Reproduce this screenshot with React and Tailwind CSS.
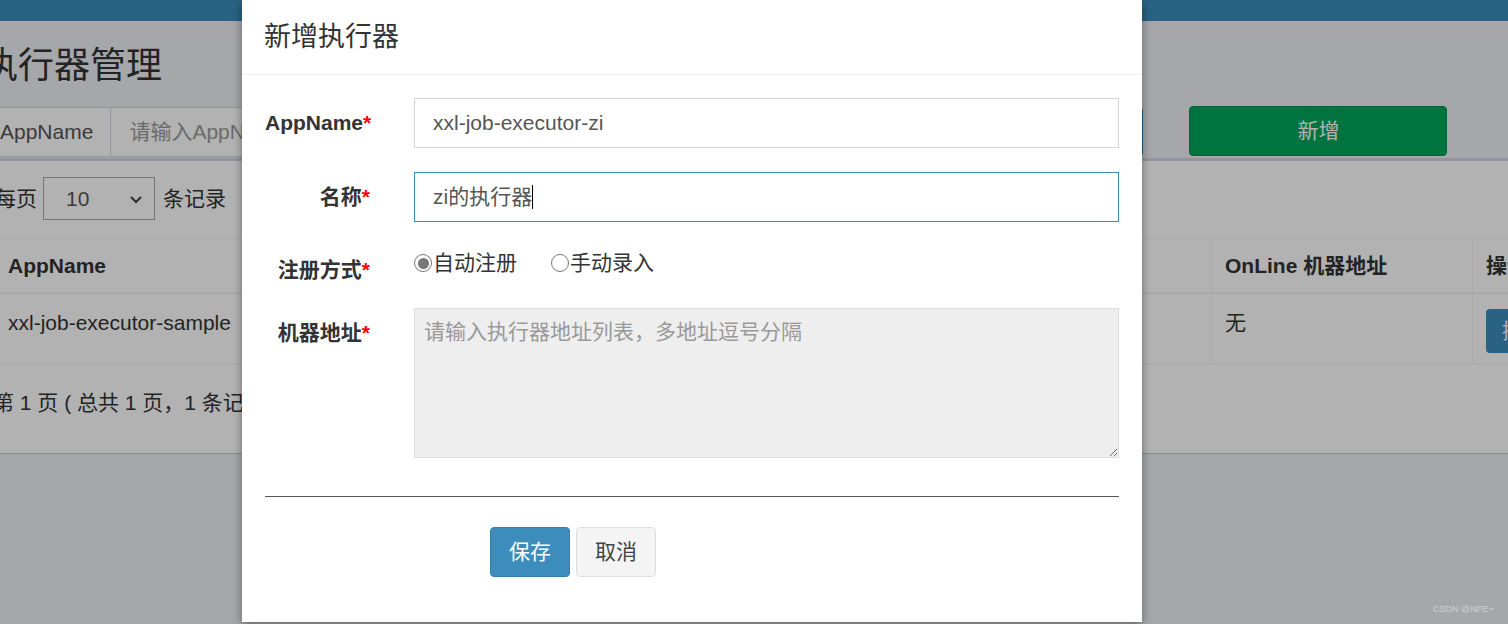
import React from "react";

const font = { fontFamily: '"Liberation Sans", "Noto Sans CJK SC", sans-serif' };

const Radio = ({ checked, label }) => (
  <label className="flex items-center text-[21px] leading-[30px] text-[#333]">
    <span className="w-[18px] h-[18px] rounded-full border border-[#777] bg-white flex items-center justify-center">
      {checked && <span className="w-[11px] h-[11px] rounded-full bg-[#777]"></span>}
    </span>
    <span className="ml-[1px]">{label}</span>
  </label>
);

const FormRow = ({ label, children, className = "", labelClass = "" }) => (
  <div className={`flex ${className}`}>
    <div className={`w-[127px] shrink-0 pr-[22px] text-right font-bold text-[21px] leading-[30px] text-[#333] ${labelClass}`}>
      {label}
      <span className="text-[#ff0000]">*</span>
    </div>
    <div className="flex-1 pl-[22px]">{children}</div>
  </div>
);

const Page = () => (
  <div className="w-[1640px] -ml-[22px] bg-[#ecf0f5] h-[624px]">
    <div className="h-[21px] bg-[#3c8dbc]"></div>

    <div className="h-[86px] pt-[24px] pl-[4px] text-[36px] leading-[42px] text-[#333]">
      执行器管理
    </div>

    <div className="flex h-[50px] items-stretch">
      <div className="ml-[4px] flex items-center px-[17px] border border-[#d2d6de] bg-white text-[21px] text-[#555]">
        AppName
      </div>
      <div className="w-[340px] flex items-center px-[18px] border border-l-0 border-[#d2d6de] bg-white text-[21px] text-[#999]">
        请输入AppName
      </div>
      <div className="w-[340px] ml-[40px] border border-[#d2d6de] bg-white"></div>
      <div className="w-[230px] ml-[82px] rounded-[4px] bg-[#3c8dbc] border border-[#367fa9]"></div>
      <div className="w-[258px] ml-[46px] -mt-[1px] h-[50px] flex items-center justify-center rounded-[4px] bg-[#00a65a] border border-[#008d4c] text-white text-[21px]">
        新增
      </div>
    </div>

    <div className="mt-[1px] ml-[2px] h-[295px] bg-white border-t-[3px] border-[#d2d6de] px-[15px] shadow-[0_1px_1px_rgba(0,0,0,0.15)]">
      <div className="flex items-center h-[61px] pt-[14px] text-[21px] text-[#333]">
        <span>每页</span>
        <div className="ml-[6px] w-[112px] h-[43px] border border-[#aaa] flex items-center justify-between pl-[22px] pr-[10px] text-[#555]">
          <span>10</span>
          <svg width="16" height="16" viewBox="0 0 16 16" fill="none" stroke="#444" strokeWidth="2">
            <path d="M3 6l5 5 5-5" />
          </svg>
        </div>
        <span className="ml-[8px]">条记录</span>
      </div>

      <div className="mt-[16px] border-t border-[#f4f4f4]">
        <div className="flex h-[55px] border-b-[2px] border-[#f4f4f4] font-bold text-[21px] text-[#333] items-center">
          <div className="w-[1216px] shrink-0 pl-[13px]">AppName</div>
          <div className="w-[261px] shrink-0 h-full flex items-center pl-[13px] border-l border-[#f4f4f4]">OnLine 机器地址</div>
          <div className="w-[120px] shrink-0 h-full flex items-center pl-[13px] border-l border-[#f4f4f4]">操作</div>
        </div>
        <div className="flex h-[70px] border-b border-[#f4f4f4] text-[21px] text-[#333]">
          <div className="w-[1216px] shrink-0 pl-[13px] pt-[13px]">xxl-job-executor-sample</div>
          <div className="w-[261px] shrink-0 pl-[13px] pt-[13px] border-l border-[#f4f4f4]">无</div>
          <div className="w-[120px] shrink-0 pl-[13px] pt-[15px] border-l border-[#f4f4f4]">
            <div className="w-[70px] h-[44px] rounded-[4px] bg-[#3c8dbc] text-white flex items-center pl-[16px]">操作</div>
          </div>
        </div>
      </div>

      <div className="pt-[23px] text-[21px] text-[#333] -ml-[2px]">
        第 1 页 ( 总共 1 页，1 条记录 )
      </div>
    </div>
  </div>
);

const App = () => {
  return (
    <div className="relative w-[1508px] h-[624px] overflow-hidden" style={font}>
      <Page />

      <div className="absolute inset-0 bg-black/30"></div>

      <div className="absolute left-[242px] top-0 w-[900px] h-[622px] bg-white shadow-[0_3px_9px_rgba(0,0,0,0.4)]">
        <div className="h-[75px] border-b border-[#f0f0f0] flex items-center px-[22px] text-[27px] text-[#333]">
          新增执行器
        </div>

        <div className="px-[23px] pt-[23px]">
          <FormRow label="AppName" className="mb-[24px]" labelClass="pt-[10px]">
            <div className="h-[50px] border border-[#d2d6de] flex items-center px-[18px] text-[21px] text-[#555]">
              xxl-job-executor-zi
            </div>
          </FormRow>

          <FormRow label="名称" className="mb-[24px]" labelClass="pt-[10px]">
            <div className="h-[50px] border border-[#3c8dbc] flex items-center px-[18px] text-[21px] text-[#555]">
              zi的执行器
              <span className="w-[1px] h-[24px] bg-black"></span>
            </div>
          </FormRow>

          <FormRow label="注册方式" className="mb-[24px] h-[38px]" labelClass="pt-[9px]">
            <div className="flex items-center gap-[34px] pt-[2px]">
              <Radio checked label="自动注册" />
              <Radio label="手动录入" />
            </div>
          </FormRow>

          <FormRow label="机器地址" labelClass="pt-[10px]">
            <textarea
              readOnly
              placeholder="请输入执行器地址列表，多地址逗号分隔"
              className="block w-full h-[150px] bg-[#eeeeee] border border-[#dddddd] px-[9px] py-[8px] text-[21px] leading-[30px] text-[#555] placeholder:text-[#999] outline-none"
              style={font}
            ></textarea>
          </FormRow>

          <div className="mt-[38px] border-t-[1.5px] border-[#555]"></div>

          <div className="mt-[30px] flex pl-[225px] gap-[6px]">
            <div className="w-[80px] h-[50px] rounded-[4px] bg-[#3c8dbc] border border-[#367fa9] text-white text-[21px] flex items-center justify-center">
              保存
            </div>
            <div className="w-[80px] h-[50px] rounded-[4px] bg-[#f4f4f4] border border-[#dddddd] text-[#444] text-[21px] flex items-center justify-center">
              取消
            </div>
          </div>
        </div>
      </div>

      <div className="absolute right-[14px] bottom-[8px] text-[9px] text-[#d0d0d0]">
        CSDN @NPE~
      </div>
    </div>
  );
};

export default App;
